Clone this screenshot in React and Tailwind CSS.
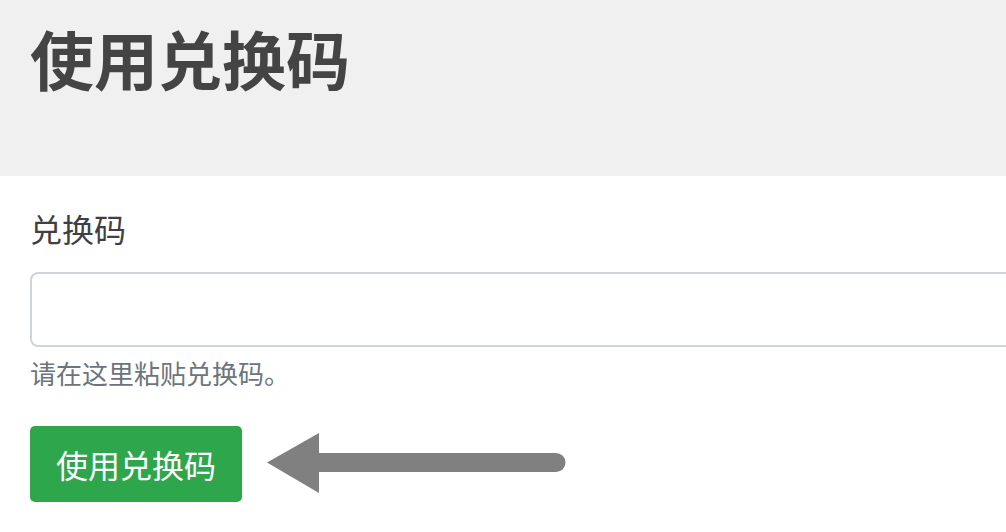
import React from 'react'

const cjk = "font-['Noto_Sans_CJK_SC','Noto_Sans',sans-serif]"

const Arrow = () => (
  <svg width="300" height="62" viewBox="0 0 300 62" className="shrink-0">
    <polygon points="0,29.5 52,0 52,60" fill="#808080" />
    <line x1="50" y1="29.5" x2="289" y2="29.5" stroke="#808080" strokeWidth="19" strokeLinecap="round" />
  </svg>
)

const App = () => {
  return (
    <div className={`h-[532px] w-full overflow-hidden bg-white ${cjk}`}>
      <header className="h-[176px] bg-[#f0f0f0] px-[30px] pt-[25px]">
        <h1 className="text-[64px] font-semibold leading-none text-[#444444]">使用兑换码</h1>
      </header>

      <section className="px-[30px] pt-[36px]">
        <label className="block text-[32px] leading-none text-[#404040]">兑换码</label>
        <input
          type="text"
          className="mt-[28px] block h-[75px] w-[1040px] rounded-[8px] border-2 border-[#ced4da] bg-white outline-none"
        />
        <p className="mt-[13px] text-[26px] leading-none text-[#6c757d]">请在这里粘贴兑换码。</p>

        <div className="mt-[40px] flex items-center gap-[25px]">
          <button className="h-[76px] rounded-[5px] bg-[#2ea64c] px-[26px] text-[32px] leading-none text-white">
            使用兑换码
          </button>
          <Arrow />
        </div>
      </section>
    </div>
  )
}

export default App
